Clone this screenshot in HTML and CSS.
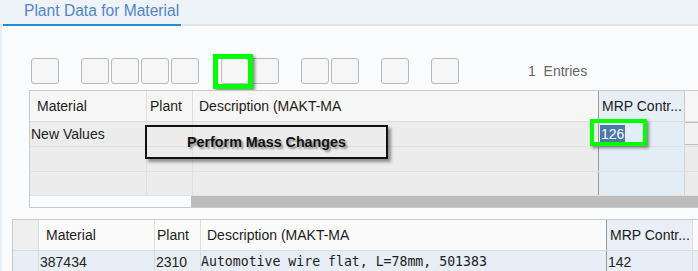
FILE: index.html
```html
<!DOCTYPE html>
<html lang="en">
<head>
    <meta charset="UTF-8">
    <title>Plant Data for Material</title>
    <link rel="stylesheet" href="styles.css">
</head>
<body>
    <div class="tabbar">
        <div class="tab">Plant Data for Material</div>
    </div>

    <div class="page">
        <div class="toolbar">
            <div class="group"><span class="btn"></span></div>
            <div class="group">
                <span class="btn"></span><span class="btn"></span><span class="btn"></span><span class="btn"></span>
            </div>
            <div class="group"><span class="btn"></span><span class="btn"></span></div>
            <div class="group"><span class="btn"></span><span class="btn"></span></div>
            <div class="group"><span class="btn"></span></div>
            <div class="group"><span class="btn"></span></div>
            <span class="entries">1&nbsp; Entries</span>
            <div class="mark mark-btn"></div>
        </div>

        <!-- mass change input grid -->
        <div class="grid grid-edit">
            <div class="row head">
                <div class="cell c-mat">Material</div>
                <div class="cell c-plant">Plant</div>
                <div class="cell c-desc">Description (MAKT-MA</div>
                <div class="cell c-mrp">MRP Contr...</div>
                <div class="cell c-rest"></div>
            </div>
            <div class="row body first">
                <div class="cell c-mat">New Values</div>
                <div class="cell c-plant"></div>
                <div class="cell c-desc"></div>
                <div class="cell c-mrp"><span class="selected">126</span></div>
                <div class="cell c-rest"></div>
            </div>
            <div class="row body">
                <div class="cell c-mat"></div>
                <div class="cell c-plant"></div>
                <div class="cell c-desc"></div>
                <div class="cell c-mrp"></div>
                <div class="cell c-rest"></div>
            </div>
            <div class="row body last">
                <div class="cell c-mat"></div>
                <div class="cell c-plant"></div>
                <div class="cell c-desc"></div>
                <div class="cell c-mrp"></div>
                <div class="cell c-rest"></div>
            </div>
            <div class="hscroll"><div class="thumb"></div></div>

            <div class="callout">Perform Mass Changes</div>
            <div class="mark mark-cell"></div>
        </div>

        <!-- selected materials -->
        <div class="grid grid-list">
            <div class="row head">
                <div class="cell c-sel"></div>
                <div class="cell c-mat">Material</div>
                <div class="cell c-plant">Plant</div>
                <div class="cell c-desc">Description (MAKT-MA</div>
                <div class="cell c-mrp">MRP Contr...</div>
                <div class="cell c-rest"></div>
            </div>
            <div class="row body">
                <div class="cell c-sel"></div>
                <div class="cell c-mat">387434</div>
                <div class="cell c-plant">2310</div>
                <div class="cell c-desc mono">Automotive wire flat, L=78mm, 501383</div>
                <div class="cell c-mrp">142</div>
                <div class="cell c-rest"></div>
            </div>
        </div>
    </div>
</body>
</html>
```

FILE: styles.css
```css
* {
    margin: 0;
    padding: 0;
    box-sizing: border-box;
}

body {
    font-family: 'Liberation Sans', Arial, sans-serif;
    font-size: 14px;
    color: #222;
    background-color: #e9eef3;
    width: 698px;
    height: 271px;
    overflow: hidden;
}

.tabbar {
    height: 26px;
    background: #eef3f7;
    border-bottom: 2px solid #dbe6ef;
    display: flex;
    align-items: flex-end;
}

.tab {
    margin-left: 3px;
    margin-bottom: -2px;
    padding: 0 2px 2px 21px;
    height: 26px;
    line-height: 22px;
    font-size: 15.6px;
    color: #5286c0;
    border-bottom: 2px solid #1f8fce;
}

.page {
    margin-left: 2px;
    background: #f9fbfd;
    height: 245px;
    padding-top: 32px;
}

.toolbar {
    position: relative;
    display: flex;
    align-items: center;
    height: 26px;
    padding-left: 29px;
    gap: 22px;
}

.group {
    display: flex;
    gap: 2px;
}

.btn {
    display: block;
    width: 28px;
    height: 26px;
    background: #f6f6f6;
    border: 1px solid #b9b9b9;
    border-radius: 3px;
}

.entries {
    margin-left: 47px;
    color: #666;
    font-size: 14px;
}

.mark {
    position: absolute;
    border: 5px solid #00ff00;
    box-shadow: 2px 2px 3px rgba(0, 0, 0, 0.45);
}

.mark-btn {
    left: 211px;
    top: -4px;
    width: 40px;
    height: 35px;
}

.grid {
    position: relative;
    border: 1px solid #c9c9c9;
    border-right: none;
}

.grid-edit {
    margin: 6px 0 0 27px;
}

.grid-list {
    margin: 11px 0 0 10px;
}

.row {
    display: flex;
}

.cell {
    flex: none;
    border-right: 1px solid #dedede;
    white-space: nowrap;
    overflow: hidden;
}

.head {
    height: 31px;
    background: #f6f6f6;
    border-bottom: 1px solid #dcdcdc;
}

.head .cell {
    line-height: 30px;
    color: #1c1c1c;
}

.grid-edit .c-mat { width: 117px; padding-left: 7px; }
.grid-edit .c-plant { width: 46px; padding-left: 3px; }
.grid-edit .c-desc { width: 406px; padding-left: 6px; }
.grid-edit .c-mrp { width: 86px; padding-left: 3px; border-right-color: #c9c9c9; }
.grid-edit .c-rest { flex: 1; border-right: none; }

.grid-edit .head .c-mrp {
    background: #e6eef6;
    border-left: 1px solid #9a9a9a;
    margin-left: -1px;
    width: 87px;
}

.grid-edit .body {
    height: 25px;
    background: #ececec;
    border-bottom: 1px solid #e0e0e0;
}

.grid-edit .body.last {
    height: 23px;
    border-bottom: none;
}

.grid-edit .body .cell {
    line-height: 24px;
    border-right-color: #e0e0e0;
}

.grid-edit .body .c-mat {
    padding-left: 1px;
    line-height: 25px;
}

.grid-edit .body .c-mrp {
    background: #e3edf6;
    border-left: 1px solid #9a9a9a;
    margin-left: -1px;
    width: 87px;
    padding-left: 1px;
    border-right-color: #d4d4d4;
}

.grid-edit .body.first .c-rest {
    background: #f2f2f2;
    border-top: 1px solid #bdbdbd;
    border-bottom: 1px solid #bdbdbd;
    margin-bottom: 1px;
}

.selected {
    background: #4a78a9;
    color: #fff;
    padding: 1px 1px;
}

.hscroll {
    display: flex;
    height: 12px;
    background: #fbfcfd;
    border-top: 1px solid #e2e2e2;
}

.thumb {
    margin-left: 161px;
    flex: 1;
    background: #bdbdbd;
}

.callout {
    position: absolute;
    left: 115px;
    top: 34px;
    width: 243px;
    height: 34px;
    border: 2px solid #111;
    box-shadow: 3px 3px 3px rgba(0, 0, 0, 0.4);
    text-align: center;
    line-height: 31px;
    font-weight: bold;
    font-size: 14.3px;
    color: #111;
    text-shadow: 2px 2px 2px #8a8a8a;
}

.mark-cell {
    left: 560px;
    top: 28px;
    width: 57px;
    height: 27px;
    border-width: 4px;
}

.grid-list .c-sel { width: 26px; background: #efefef; }
.grid-list .c-mat { width: 116px; padding-left: 7px; }
.grid-list .c-plant { width: 46px; padding-left: 2px; }
.grid-list .c-desc { width: 406px; padding-left: 6px; }
.grid-list .c-mrp { width: 86px; padding-left: 3px; }
.grid-list .c-rest { flex: 1; border-right: none; }

.grid-list .head {
    background: #fafafa;
}

.grid-list .head .c-mrp {
    background: #e8eff6;
    border-left: 1px solid #9a9a9a;
    margin-left: -1px;
    width: 87px;
}

.grid-list .body {
    height: 24px;
    background: #e7eef6;
}

.grid-list .body .cell {
    line-height: 22px;
    border-right-color: #d6dde6;
}

.grid-list .body .c-sel { background: #e7eef6; }
.grid-list .body .c-mat { padding-left: 1px; }
.grid-list .body .c-plant { padding-left: 1px; }
.grid-list .body .c-desc { padding-left: 0; }
.grid-list .body .c-mrp {
    border-left: 1px solid #9a9a9a;
    margin-left: -1px;
    width: 87px;
    padding-left: 1px;
}

.mono {
    font-family: 'DejaVu Sans Mono', 'Liberation Mono', monospace;
    font-size: 13.2px;
}
```
